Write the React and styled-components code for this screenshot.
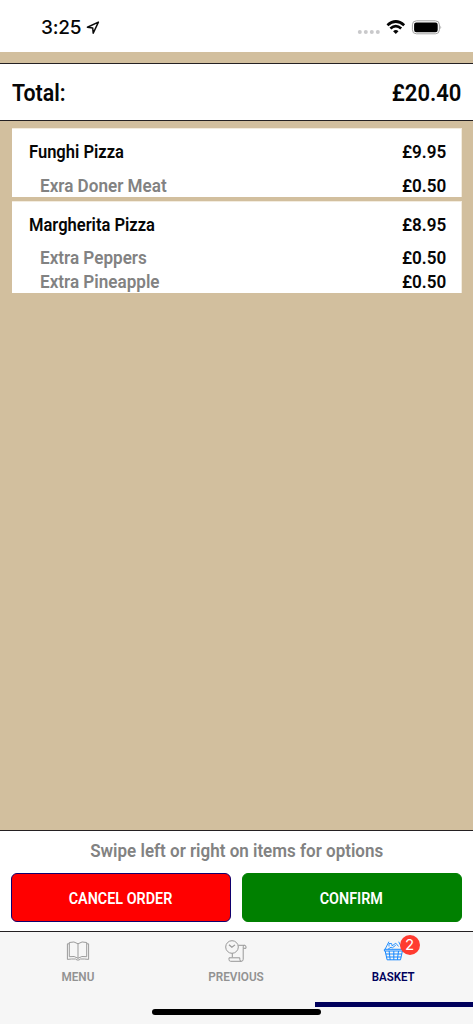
import React from 'react';
import styled, { createGlobalStyle, css } from 'styled-components';

const GlobalStyle = createGlobalStyle`
  * { box-sizing: border-box; }
  body { margin: 0; background: #d2bf9e; }
`;

const Screen = styled.div`
  position: relative;
  display: flex;
  flex-direction: column;
  width: 100%;
  height: 1024px;
  overflow: hidden;
  background: #d2bf9e;
  font-family: Roboto, 'Liberation Sans', sans-serif;
  font-weight: 600;
  color: #060606;
`;

const StatusBar = styled.header`
  display: flex;
  align-items: center;
  justify-content: space-between;
  height: 52px;
  flex: none;
  padding: 3px 31px 0 41px;
  background: #fff;
`;

const Clock = styled.div`
  display: flex;
  align-items: center;
  gap: 4.5px;
  font: 500 19px/24px Inter, sans-serif;
  letter-spacing: -0.2px;
`;

const Indicators = styled.div`
  display: flex;
  align-items: center;
`;

const Label = styled.span`
  display: inline-block;
  white-space: nowrap;
  font-size: ${p => p.$size || 19}px;
  line-height: 24px;
  color: ${p => p.$color || 'inherit'};
  transform: scaleX(${p => p.$narrow || 0.87});
  transform-origin: ${p => p.$from || 'left'} center;
`;

const TotalBar = styled.section`
  display: flex;
  align-items: center;
  justify-content: space-between;
  flex: none;
  height: 58px;
  margin-top: 11px;
  padding: 2px 12px 0 12px;
  background: #fff;
  border: solid #242022;
  border-width: 1.5px 0;
`;

const Items = styled.main`
  display: flex;
  flex: 1;
  flex-direction: column;
  gap: 4px;
  padding: 7px 11px 0 12px;
`;

const Card = styled.article`
  padding: 11px 15px 0 17px;
  background: #fff;
  border: solid #f3ecdf;
  border-width: 1px 1px 0 0;
`;

const Row = styled.div`
  display: flex;
  justify-content: space-between;
  height: 24px;
  ${p => p.$extra && css`padding-left: 11px;`}
  ${p => p.$main && css`margin-bottom: 9.5px;`}
  &:last-child { height: 23px; }
`;

const Footer = styled.section`
  flex: none;
  height: 102px;
  padding: 8px 11px 0;
  text-align: center;
  background: #fff;
  border: solid #242022;
  border-width: 1.5px 0;
`;

const Actions = styled.div`
  display: grid;
  grid-template-columns: 1fr 1fr;
  gap: 11px;
  margin-top: 10px;
`;

const Button = styled.button`
  height: 49px;
  padding: 2px 1px 0 0;
  border: 1px solid ${p => p.$edge};
  border-radius: 6px;
  background: ${p => p.$fill};
  color: #fff;
  font: inherit;
`;

const TabBar = styled.nav`
  display: grid;
  grid-template-columns: repeat(3, 1fr);
  flex: none;
  height: 92px;
  background: #f6f6f6;
`;

const Tab = styled.div`
  display: flex;
  flex-direction: column;
  align-items: center;
  height: 75px;
  padding: 7px 1px 0 0;
  color: ${p => (p.$active ? '#00005c' : '#929292')};
  border-bottom: 5px solid ${p => (p.$active ? '#00005c' : 'transparent')};
`;

const IconBox = styled.div`
  position: relative;
  height: 25px;
  svg { display: block; }
`;

const Badge = styled.span`
  position: absolute;
  left: 17px;
  top: -4px;
  width: 20px;
  height: 20px;
  border-radius: 50%;
  background: #ff3b30;
  color: #fff;
  text-align: center;
  font: 400 15px/20px Inter, sans-serif;
`;

const HomeIndicator = styled.div`
  position: absolute;
  left: 152px;
  bottom: 9px;
  width: 169px;
  height: 6px;
  border-radius: 3px;
  background: #000;
`;

const LocationIcon = () => (
  <svg width="14" height="14" viewBox="0 0 14 14" fill="none" stroke="#0a0a0a" strokeWidth="1.5" strokeLinejoin="round">
    <path d="M12.4 1.1 1.4 6.3 6.7 6.9 7.2 12.3Z" />
  </svg>
);

const StatusIcons = () => (
  <svg width="85" height="16" viewBox="0 0 85 16">
    <g fill="#c9c9cb">
      <circle cx="2.8" cy="12" r="2" /><circle cx="8.8" cy="12" r="2" />
      <circle cx="14.8" cy="12" r="2" /><circle cx="20.8" cy="12" r="2" />
    </g>
    <g fill="none" stroke="#050505" strokeWidth="2.7">
      <path d="M30.4 5.2Q38.8-2.2 47.2 5.2" />
      <path d="M33.4 8.4Q38.8 3.7 44.2 8.4" />
    </g>
    <path d="M36.1 11.2Q38.8 9 41.5 11.2L38.8 14Z" fill="#050505" />
    <rect x="55.4" y=".8" width="27" height="13" rx="4" fill="none" stroke="#a3a3a3" />
    <rect x="57.1" y="2.5" width="23.6" height="9.7" rx="2.2" fill="#000" />
    <path d="M83.5 5.5Q85 7.3 83.5 9.2Z" fill="#909090" />
  </svg>
);

const BookIcon = () => (
  <svg width="24" height="24" viewBox="0 0 24 24" fill="none" stroke="#9b9b9b" strokeWidth="1">
    <path d="M12 4.8Q8.2 1.8 3.3 3.5V17.7Q8.6 16.5 12 19.3Q15.4 16.5 20.7 17.7V3.5Q15.8 1.8 12 4.8V19.3" />
    <path d="M3.3 4.8H1.4V20.4Q5.5 19.8 9.5 20L11 21H13L14.5 20Q18.5 19.8 22.6 20.4V4.8H20.7" />
  </svg>
);

const HistoryIcon = () => (
  <svg width="24" height="24" viewBox="0 0 24 24" fill="none" stroke="#989898" strokeWidth="1">
    <circle cx="8" cy="8" r="6.3" />
    <path d="m5 5.8 2.9 2.5L11 5.9" strokeWidth="1.2" />
    <path d="M8.3 14.3V18.3M14.3 6.3H20.6Q22 6.3 22 8V9.3H19.2V20.3Q19.2 22.3 17.2 22.3H6.6Q5 22.3 5 20.5V18.8H15.8V20.3Q15.8 22.3 17.4 22.3M19.2 9.2V7.8Q19.2 6.3 20.6 6.3" />
  </svg>
);

const BasketIcon = () => (
  <svg width="22" height="24" viewBox="0 0 22 24" fill="none" stroke="#1688ff" strokeWidth="1">
    <path d="M1.4 10.3H20.2V12H1.4ZM2.2 12 4.1 20.8H17.5L19.4 12M6.1 12 7.2 20.8M10.8 12V20.8M15.5 12 14.4 20.8M2.8 15H18.8M3.5 18H18.1" />
    <path d="M2.2 10 5.9 2.7M19.2 10 15.7 2.7M6 7.5V4.5H8.6L9.1 6.8L12.8 4.2L15.6 7.5M5.2 10 8 8.2 9.4 8.8 12.8 6.2" strokeWidth=".9" />
  </svg>
);

const order = [
  { name: 'Funghi Pizza', price: '£9.95', extras: [['Exra Doner Meat', '£0.50']] },
  { name: 'Margherita Pizza', price: '£8.95', extras: [['Extra Peppers', '£0.50'], ['Extra Pineapple', '£0.50']] },
];

export default function App() {
  return (
    <>
      <GlobalStyle />
      <Screen>
        <StatusBar>
          <Clock>3:25<LocationIcon /></Clock>
          <Indicators><StatusIcons /></Indicators>
        </StatusBar>
        <TotalBar>
          <Label $size={24.5}>Total:</Label>
          <Label $size={24.5} $from="right" $narrow={0.9}>£20.40</Label>
        </TotalBar>
        <Items>
          {order.map(item => (
            <Card key={item.name}>
              <Row $main>
                <Label>{item.name}</Label>
                <Label $from="right" $narrow={0.9}>{item.price}</Label>
              </Row>
              {item.extras.map(([name, price]) => (
                <Row $extra key={name}>
                  <Label $color="#828282" $narrow={0.9}>{name}</Label>
                  <Label $from="right" $narrow={0.9}>{price}</Label>
                </Row>
              ))}
            </Card>
          ))}
        </Items>
        <Footer>
          <Label $from="center" $color="#828282" $narrow={0.895}>Swipe left or right on items for options</Label>
          <Actions>
            <Button $fill="#ff0000" $edge="#10006e">
              <Label $size={16.5} $from="center">CANCEL ORDER</Label>
            </Button>
            <Button $fill="#008000" $edge="#008000">
              <Label $size={16.5} $from="center">CONFIRM</Label>
            </Button>
          </Actions>
        </Footer>
        <TabBar>
          <Tab>
            <IconBox><BookIcon /></IconBox>
            <Label $size={13.5} $from="center">MENU</Label>
          </Tab>
          <Tab>
            <IconBox><HistoryIcon /></IconBox>
            <Label $size={13.5} $from="center">PREVIOUS</Label>
          </Tab>
          <Tab $active>
            <IconBox><BasketIcon /><Badge>2</Badge></IconBox>
            <Label $size={13.5} $from="center" $narrow={0.85}>BASKET</Label>
          </Tab>
        </TabBar>
        <HomeIndicator />
      </Screen>
    </>
  );
}
